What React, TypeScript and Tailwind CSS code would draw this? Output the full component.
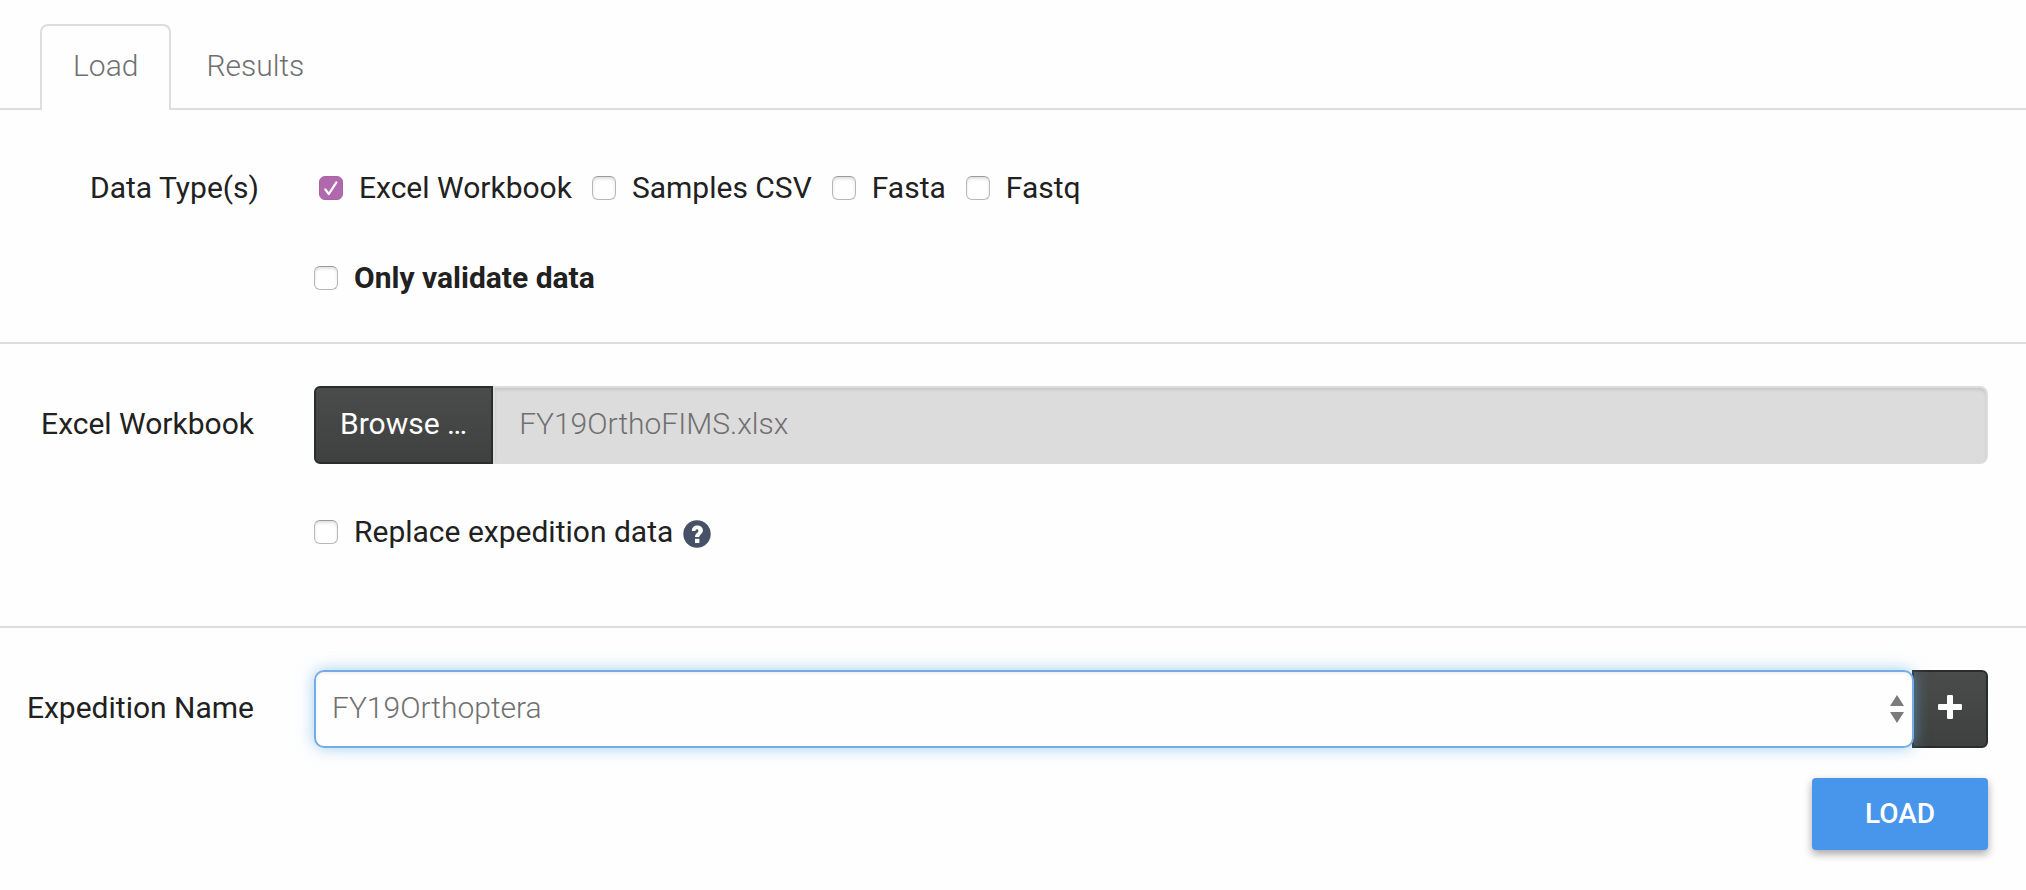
import { useState, type ReactNode } from "react";

function Checkbox({
  id,
  label,
  initial = false,
  bold = false,
}: {
  id: string;
  label: string;
  initial?: boolean;
  bold?: boolean;
}) {
  const [checked, setChecked] = useState(initial);
  return (
    <label htmlFor={id} className="flex items-center gap-4">
      <span className="relative flex size-6">
        <input
          id={id}
          type="checkbox"
          checked={checked}
          onChange={(e) => setChecked(e.target.checked)}
          className="size-6 appearance-none rounded-md border border-[#b8b8b8] border-t-[#999] bg-white shadow-[inset_0_2px_3px_rgba(0,0,0,0.12)] checked:border-[#aa62a6] checked:bg-[#b169ad] checked:shadow-none"
        />
        {checked && (
          <svg viewBox="0 0 24 24" className="pointer-events-none absolute inset-0 size-6" fill="none" stroke="white" strokeWidth="2.2" strokeLinecap="round" strokeLinejoin="round">
            <path d="M6.3 13.4 9.8 18 17.4 6.4" />
          </svg>
        )}
      </span>
      <span className={bold ? "font-bold" : ""}>{label}</span>
    </label>
  );
}

function Section({ children, className }: { children: ReactNode; className: string }) {
  return <section className={`border-b-2 border-[#ddd] ${className}`}>{children}</section>;
}

function HelpIcon() {
  return (
    <svg viewBox="0 0 28 28" className="mt-1 size-7" aria-hidden="true">
      <circle cx="14" cy="14" r="13.7" fill="#465066" />
      <path d="M8.9 11C8.9 7.6 11 5.6 14.2 5.6C17.4 5.6 19.9 7.4 19.9 10.4C19.9 13.8 16.3 14.3 16.3 17H12C12 13.3 15.4 12.9 15.4 10.8C15.4 9.7 14.8 9.2 14 9.2C13 9.2 12.5 9.9 12.4 11Z" fill="white" />
      <path d="M12 18.8H16.4V23H12Z" fill="white" />
    </svg>
  );
}

const darkButton =
  "flex shrink-0 items-center justify-center border-2 border-[#2b2d2c] bg-linear-to-b from-[#4a4c4b] to-[#3f4140] text-white";

export default function App() {
  return (
    <main className="min-h-screen bg-[#fefefe] font-[Roboto,sans-serif] text-[30px] leading-10 text-[#212121]">
      <nav className="flex gap-0.5 border-b-2 border-[#ddd] pt-6 pl-10 font-light text-[#707070]">
        <a href="#load" className="-mb-0.5 rounded-t-lg border-2 border-b-0 border-[#ddd] bg-[#fefefe] px-[31px] pt-5 pb-6">
          Load
        </a>
        <a href="#results" className="border-2 border-b-0 border-transparent px-[31px] pt-5">
          Results
        </a>
      </nav>

      <form onSubmit={(e) => e.preventDefault()}>
        <Section className="pt-[58px] pb-11">
          <div className="flex gap-[60px]">
            <span className="w-[259px] text-right">Data Type(s)</span>
            <div className="flex gap-5">
              <Checkbox id="excel" label="Excel Workbook" initial />
              <Checkbox id="csv" label="Samples CSV" />
              <Checkbox id="fasta" label="Fasta" />
              <Checkbox id="fastq" label="Fastq" />
            </div>
          </div>
          <div className="mt-[50px] flex pl-[314px]">
            <Checkbox id="validate" label="Only validate data" bold />
          </div>
        </Section>

        <Section className="pt-[42px] pr-[38px] pb-[74px]">
          <div className="flex items-center gap-[60px]">
            <label htmlFor="workbook" className="w-[254px] shrink-0 pb-0.5 text-right">
              Excel Workbook
            </label>
            <div className="flex h-[78px] grow">
              <button type="button" className={`${darkButton} rounded-l-md px-6 pb-0.5`}>
                Browse …
              </button>
              <input
                id="workbook"
                readOnly
                value="FY19OrthoFIMS.xlsx"
                className="min-w-0 grow rounded-r-lg border-2 border-[#dcdcdc] bg-[#dcdcdc] px-6 pb-0.5 font-light text-[#707070] shadow-[inset_0_2px_3px_rgba(0,0,0,0.1)] outline-none"
              />
            </div>
          </div>
          <div className="mt-12 flex items-center gap-2.5 pl-[314px]">
            <Checkbox id="replace" label="Replace expedition data" />
            <HelpIcon />
          </div>
        </Section>

        <section className="pt-[42px] pr-[38px]">
          <div className="flex items-center gap-[60px]">
            <label htmlFor="expedition" className="w-[254px] shrink-0 pb-0.5 text-right">
              Expedition Name
            </label>
            <div className="flex h-[78px] grow">
              <div className="relative z-10 -mr-0.5 flex grow">
                <select
                  id="expedition"
                  className="grow appearance-none rounded-[10px] border-2 border-[#73ade5] bg-transparent px-4 pb-0.5 font-light text-[#707070] shadow-[inset_0_2px_2px_rgba(0,0,0,0.05),0_0_16px_rgba(102,175,233,0.6)] outline-none"
                >
                  <option>FY19Orthoptera</option>
                </select>
                <svg viewBox="0 0 14 28" className="pointer-events-none absolute top-[25px] right-2.5 h-7 w-3.5" fill="#7b7b7b">
                  <path d="M7 0 14 11H0ZM0 17H14L7 28Z" />
                </svg>
              </div>
              <button type="button" aria-label="Add expedition" className={`${darkButton} w-[76px] rounded-r-md pb-1`}>
                <svg viewBox="0 0 24 24" className="size-6" fill="white" aria-hidden="true">
                  <rect x="9" y="0" width="6" height="24" rx="1.3" />
                  <rect x="0" y="9" width="24" height="6" rx="1.3" />
                </svg>
              </button>
            </div>
          </div>
          <div className="mt-[30px] flex justify-end">
            <button type="submit" className="h-[72px] w-44 rounded bg-[#4896ec] text-[28px] font-medium text-white shadow-[0_4px_8px_rgba(0,0,0,0.35)]">
              LOAD
            </button>
          </div>
        </section>
      </form>
    </main>
  );
}
